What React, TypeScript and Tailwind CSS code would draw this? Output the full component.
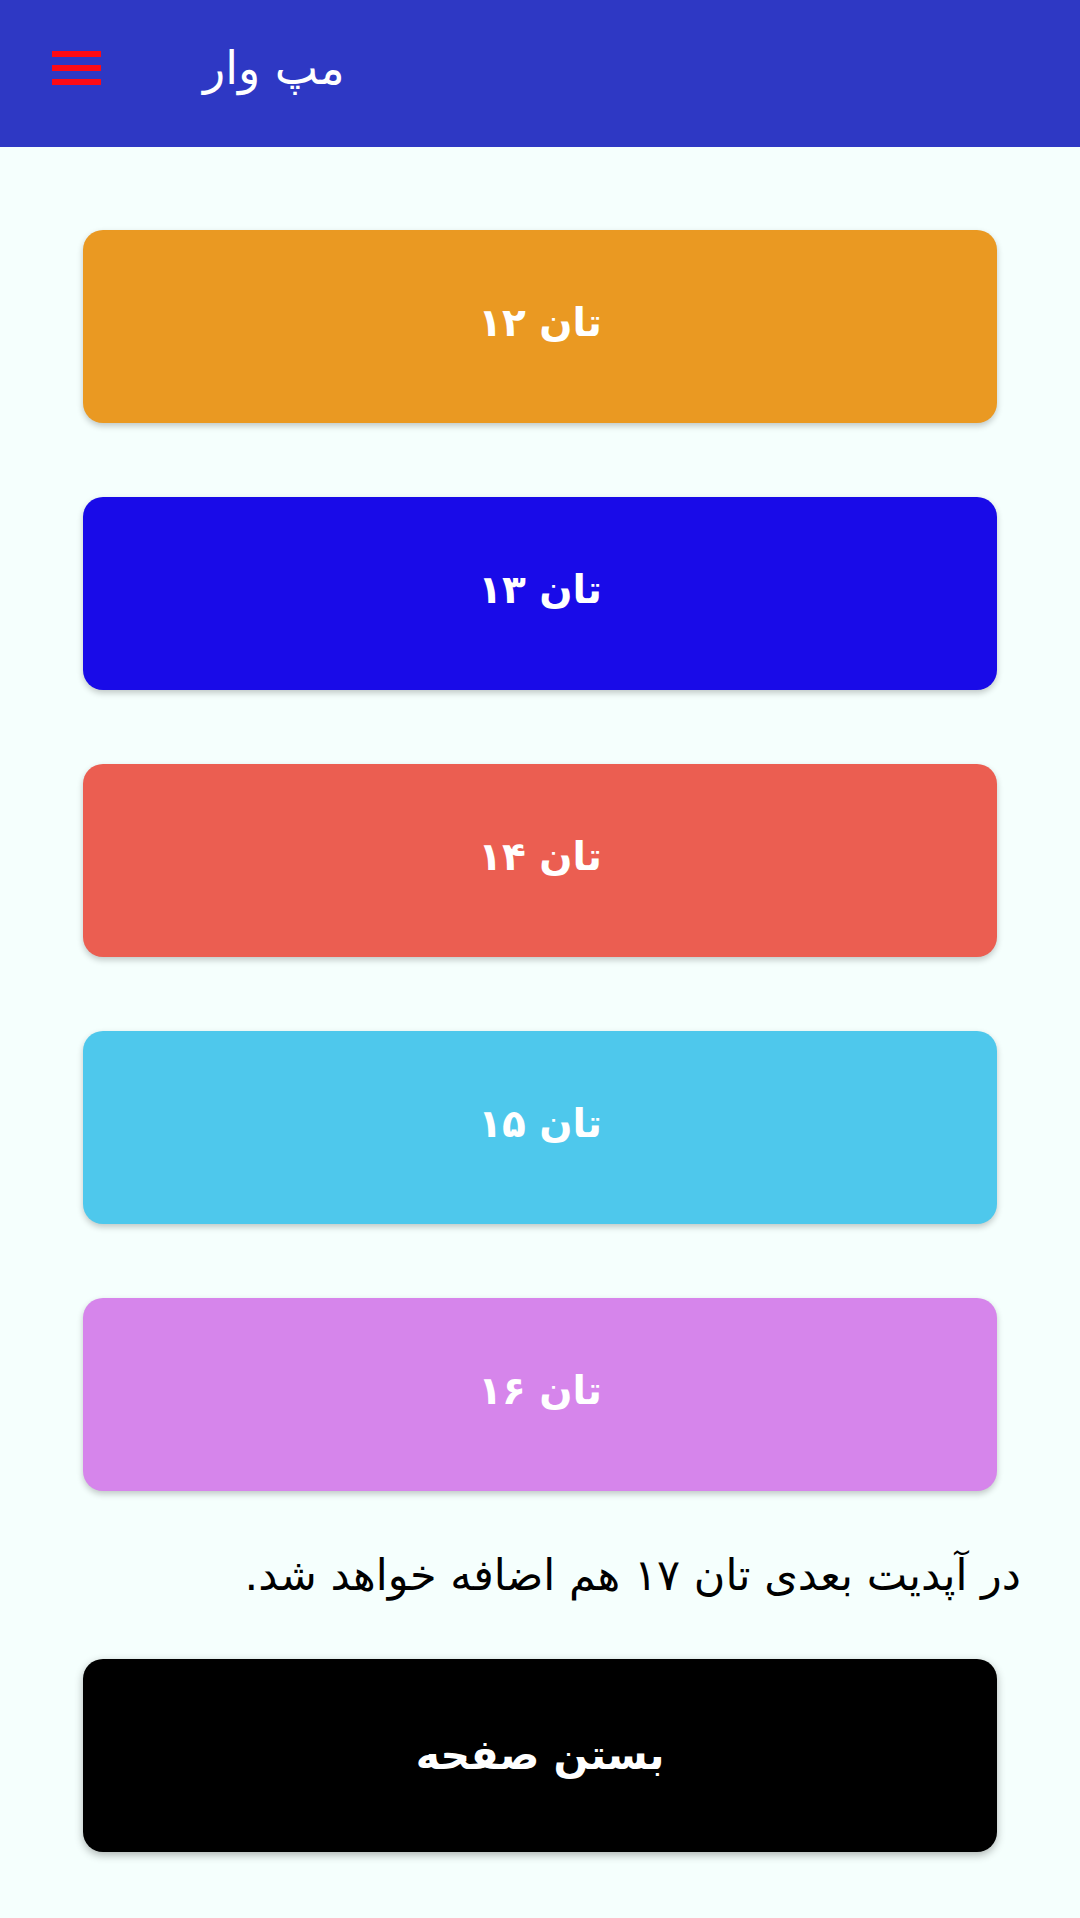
import React from "react";

const tons = [
    { label: "تان ۱۲", color: "bg-[#ea9922]" },
    { label: "تان ۱۳", color: "bg-[#190be8]" },
    { label: "تان ۱۴", color: "bg-[#eb5e51]" },
    { label: "تان ۱۵", color: "bg-[#4ec8ec]" },
    { label: "تان ۱۶", color: "bg-[#d685eb]" },
];

export default function App() {
    return (
        <div
            className="min-h-screen bg-[#f5fffd]"
            style={{ fontFamily: '"DejaVu Sans", "Noto Sans", sans-serif' }}
        >
            {/* Toolbar */}
            <header className="h-[147px] bg-[#2e38c4] flex items-center pl-[52px] pb-[12px]">
                <button className="w-[49px] h-[34px] flex flex-col justify-between">
                    <span className="block h-[6px] w-full bg-[#ff0a14]" />
                    <span className="block h-[6px] w-full bg-[#ff0a14]" />
                    <span className="block h-[6px] w-full bg-[#ff0a14]" />
                </button>
                <h1 dir="rtl" className="ml-[102px] text-white text-[46px] leading-none">
                    مپ وار
                </h1>
            </header>

            <main className="px-[83px] pt-[83px]">
                <div className="flex flex-col gap-[74px]">
                    {tons.map((t) => (
                        <button
                            key={t.label}
                            dir="rtl"
                            className={`h-[193px] w-full rounded-[20px] ${t.color} text-white text-[39px] font-bold shadow-[0_3px_6px_rgba(0,0,0,0.22)] flex items-center justify-center pb-[6px]`}
                        >
                            {t.label}
                        </button>
                    ))}
                </div>

                <p dir="rtl" className="mt-[50px] -mr-[24px] text-black text-[43px] leading-[68px]">
                    در آپدیت بعدی تان ۱۷ هم اضافه خواهد شد.
                </p>

                <button
                    dir="rtl"
                    className="mt-[50px] h-[193px] w-full rounded-[20px] bg-black text-white text-[41px] font-bold shadow-[0_3px_8px_rgba(0,0,0,0.3)] flex items-center justify-center"
                >
                    بستن صفحه
                </button>
            </main>
        </div>
    );
}
